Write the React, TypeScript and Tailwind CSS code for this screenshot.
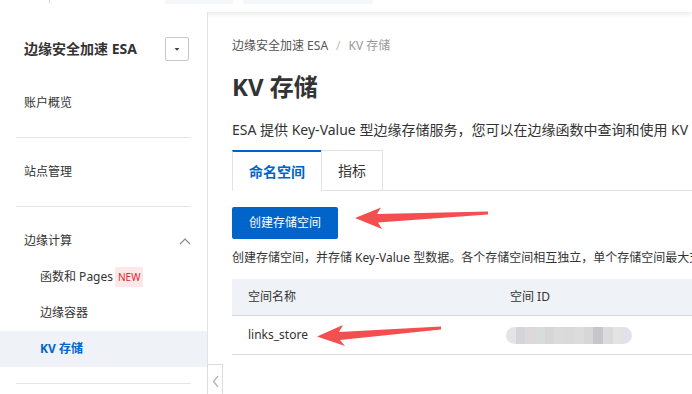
import React from "react";

const font = { fontFamily: '"Noto Sans", "Noto Sans CJK SC", sans-serif' };

function Sidebar() {
  return (
    <aside className="w-[208px] shrink-0 border-r border-[#e3e3e3] bg-white relative z-20">
      <div className="pt-[25px] pl-6 pr-[18px] flex items-center justify-between h-[49px]">
        <span className="text-[14px] font-bold text-[#333] leading-6">边缘安全加速 ESA</span>
        <div className="w-6 h-6 border border-[#c8c8c8] rounded-[2px] flex items-center justify-center">
          <svg width="8" height="5" viewBox="0 0 8 5">
            <path d="M1.5 1 L6.5 1 L4 3.8 Z" fill="#444" />
          </svg>
        </div>
      </div>
      <div className="mt-6 pb-4">
        <div className="h-9 flex items-center pl-6 text-[12px] text-[#333]">账户概览</div>
      </div>
      <div className="mx-4 border-t border-[#e5e5e5]" />
      <div className="py-4">
        <div className="h-9 flex items-center pl-6 text-[12px] text-[#333]">站点管理</div>
      </div>
      <div className="mx-4 border-t border-[#e5e5e5]" />
      <div className="py-4">
        <div className="h-9 flex items-center justify-between pl-6 pr-4 text-[12px] text-[#333]">
          <span>边缘计算</span>
          <svg width="12" height="8" viewBox="0 0 12 8">
            <path d="M1 7 L6 2 L11 7" fill="none" stroke="#888" strokeWidth="1.2" />
          </svg>
        </div>
        <div className="h-9 flex items-center pl-10 text-[12px] text-[#333]">
          <span>函数和 Pages</span>
          <span className="ml-[2px] h-5 px-[3px] flex items-center bg-[#fde8e9] text-[#e3262d] text-[10px] leading-none">NEW</span>
        </div>
        <div className="h-9 flex items-center pl-10 text-[12px] text-[#333]">边缘容器</div>
        <div className="h-9 flex items-center pl-10 text-[12px] font-bold text-[#0064c8] bg-[#eff3f8]">KV 存储</div>
      </div>
      <div className="mx-4 border-t border-[#e5e5e5]" />
      <div className="absolute left-[207px] top-[352px] w-4 h-[40px] bg-white border border-[#dcdcdc] flex items-start justify-center pt-[10px]">
        <svg width="7" height="13" viewBox="0 0 7 13">
          <path d="M6 1 L1.5 6.5 L6 12" fill="none" stroke="#b5b5b5" strokeWidth="1.3" />
        </svg>
      </div>
    </aside>
  );
}

function BlurredId() {
  const shades = ["#e4e4e4", "#d3d5d8", "#dcd9da", "#d8dcdc", "#d6d6d9", "#dedada", "#d8dadd", "#dcdcdc", "#d5d7da", "#c9c6cb", "#d9dcdf", "#e6e2e2", "#dfe3e7"];
  return (
    <div className="w-[126px] h-[17px] rounded-full overflow-hidden flex blur-[0.6px]">
      {shades.map((c, i) => (
        <div key={i} className="flex-1 h-full" style={{ background: c }} />
      ))}
    </div>
  );
}

function Main() {
  return (
    <main className="flex-1 min-w-0 overflow-hidden relative">
      <div className="w-[900px] pl-6 pt-6">
        <div className="h-5 flex items-center text-[12px]">
          <span className="text-[#555]">边缘安全加速 ESA</span>
          <span className="mx-[8px] text-[#bbb]">/</span>
          <span className="text-[#999]">KV 存储</span>
        </div>
        <h1 className="mt-[15px] h-8 leading-8 text-[24px] font-bold text-[#333]">KV 存储</h1>
        <p className="mt-[17px] h-5 leading-5 text-[14px] text-[#333] whitespace-nowrap">
          ESA 提供 Key-Value 型边缘存储服务，您可以在边缘函数中查询和使用 KV 存储中的数据。
        </p>
        <div className="mt-[10px] flex h-[41px]">
          <div className="h-[41px] px-4 flex items-center border-t-2 border-t-[#0064c8] border-l border-l-[#e3e3e3] bg-white text-[14px] font-bold text-[#0064c8]">
            命名空间
          </div>
          <div className="h-[41px] px-4 flex items-center border border-[#e3e3e3] text-[14px] text-[#333]">
            指标
          </div>
          <div className="flex-1 border-b border-[#e3e3e3]" />
        </div>
        <button className="mt-4 h-8 px-[17px] rounded-[2px] bg-[#0064c8] text-white text-[12px] flex items-center">
          创建存储空间
        </button>
        <p className="mt-[10px] h-[18px] leading-[18px] text-[12px] text-[#333] whitespace-nowrap">
          创建存储空间，并存储 Key-Value 型数据。各个存储空间相互独立，单个存储空间最大支持 1 GB 存储容量。
        </p>
        <div className="mt-3">
          <div className="flex h-[37px] bg-[#eff3f8] border-b border-[#d9d9d9] text-[12px] text-[#333]">
            <div className="w-[262px] pl-4 flex items-center">空间名称</div>
            <div className="flex-1 pl-4 flex items-center">空间 ID</div>
          </div>
          <div className="flex h-[39px] border-b border-[#dcdcdc] text-[12px] text-[#333]">
            <div className="w-[262px] pl-4 flex items-center">links_store</div>
            <div className="flex-1 pl-3 flex items-center">
              <BlurredId />
            </div>
          </div>
        </div>
      </div>
    </main>
  );
}

function Arrows() {
  return (
    <svg className="absolute left-0 top-0 pointer-events-none z-30" width="692" height="394" viewBox="0 0 692 394">
      <polygon
        points="355,218 381,207.5 377,214 488,211.5 488,214.5 378,222.5 382,229"
        fill="#f44f50"
      />
      <polygon
        points="317,336.5 343,325 339,332 441,326.5 441,329.5 340,340 345,346"
        fill="#f44f50"
      />
    </svg>
  );
}

export default function App() {
  return (
    <div className="relative w-full h-[394px] overflow-hidden bg-white" style={font}>
      <header className="relative z-10 h-3 bg-white shadow-[0_2px_5px_rgba(0,0,0,0.09)]">
        <div className="absolute left-[49px] top-0 w-px h-[3px] bg-[#cfcfcf]" />
        <div className="absolute left-[165px] top-0 w-[68px] h-1 bg-[#f5f6f9] rounded-b-[2px]" />
        <div className="absolute left-[243px] top-0 w-[130px] h-1 bg-[#f5f6f9] rounded-b-[2px]" />
      </header>
      <div className="flex h-[382px]">
        <Sidebar />
        <Main />
      </div>
      <Arrows />
    </div>
  );
}
